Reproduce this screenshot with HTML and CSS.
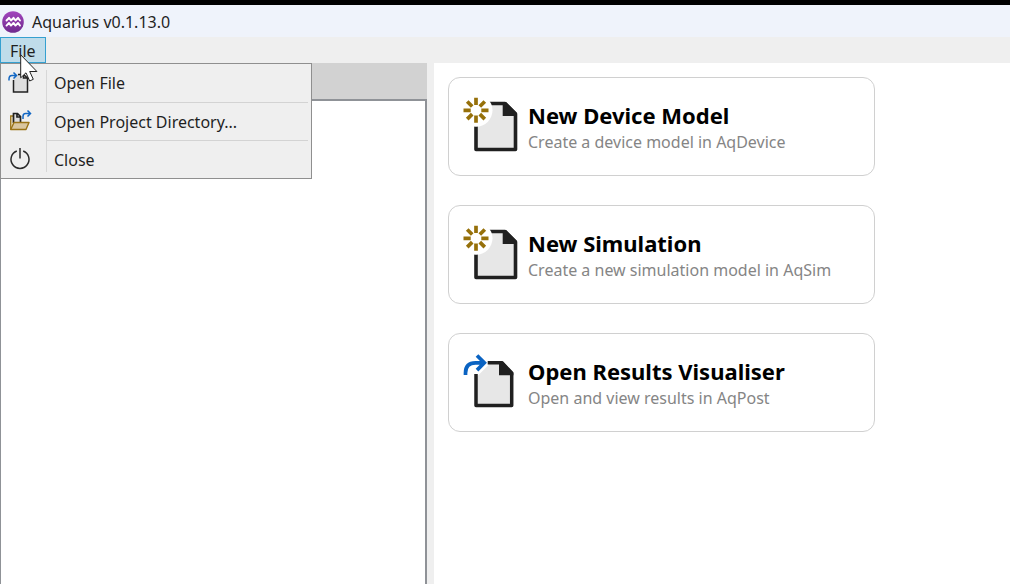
FILE: index.html
```html
<!DOCTYPE html>
<html lang="en">
<head>
<meta charset="utf-8">
<title>Aquarius v0.1.13.0</title>
<link rel="stylesheet" href="styles.css">
</head>
<body>
<div class="app">
  <header class="titlebar">
    <svg class="logo" viewBox="0 0 22 22" aria-hidden="true">
      <defs><linearGradient id="purple" x1="0" y1="0" x2="0" y2="1"><stop offset="0" stop-color="#a245bd"/><stop offset="1" stop-color="#702b8e"/></linearGradient></defs>
      <circle cx="11" cy="11" r="10.8" fill="url(#purple)"/>
      <path d="M4.500 9.500 7 6.800l2 2.700 2.500-2.700 2 2.700L16 6.800l2 2.700M4.500 14.600l2.500-2.700 2 2.700 2.500-2.700 2 2.700 2.500-2.700 2 2.700" fill="none" stroke="#fff" stroke-width="1.900" stroke-linecap="round" stroke-linejoin="round"/>
    </svg>
    <span>Aquarius v0.1.13.0</span>
  </header>
  <nav class="menubar">
    <button class="menu-button" type="button" aria-haspopup="true" aria-expanded="true">File</button>
    <div class="menu" role="menu">
      <button class="menu-item" type="button" role="menuitem">
        <svg class="menu-icon" viewBox="0 0 24 24" aria-hidden="true">
          <path d="M5 9v12h14V6h-4V3H9z" fill="#dedede"/>
          <path d="M5.500 9v12h14V6.500M10 3.500h5.500l4 3.500h-4V3.500" fill="none" stroke="#222" stroke-width="1.500"/>
          <path d="M1 9.500V8q0-3.500 3-3.500h4M5.500 1.500l3 3-3 3" fill="none" stroke="#1267c4" stroke-width="1.500"/>
        </svg>
        <span class="menu-label">Open File</span>
      </button>
      <button class="menu-item" type="button" role="menuitem">
        <svg class="menu-icon" viewBox="0 0 24 24" aria-hidden="true">
          <path d="M2.700 20.500V7h3v7h13v3" fill="#eee2c6" stroke="#9a7417" stroke-width="1.300"/>
          <path d="M5.500 14V4.500h4l3 3V14M9 4.500V8h3.500" fill="#ddd" stroke="#222" stroke-width="1.700"/>
          <path d="M2.700 20.500 6 13.500h15l-3 7z" fill="#dac79f" stroke="#9a7417" stroke-width="1.400" stroke-linejoin="round"/>
          <path d="M15 10V7.500q0-3 2.500-3H22M19.500 1.500l3 3-3 3" fill="none" stroke="#1267c4" stroke-width="1.500"/>
        </svg>
        <span class="menu-label">Open Project Directory...</span>
      </button>
      <button class="menu-item" type="button" role="menuitem">
        <svg class="menu-icon" viewBox="0 0 24 24" aria-hidden="true">
          <path d="M8.800 4A9 9 0 1 0 15.200 4M12 1v10.500" fill="none" stroke="#2b2b2b" stroke-width="1.500"/>
        </svg>
        <span class="menu-label">Close</span>
      </button>
    </div>
    <svg class="pointer" viewBox="0 0 18 28" aria-hidden="true">
      <path d="M.7.800v23l5.300-5 3.700 8.200 3.600-1.700-3.600-7.800h7.200z" fill="#fff" stroke="#222" stroke-width="1"/>
    </svg>
  </nav>
  <div class="workspace">
    <aside class="project">
      <div class="project-head"></div>
      <div class="project-body"></div>
    </aside>
    <main class="start">
      <button class="card" type="button">
        <svg class="card-icon" viewBox="0 0 56 60" aria-hidden="true">
          <g id="new-document">
            <path d="M13 6.500h29l10.500 10.500v35.500H13z" fill="#e7e7e7" stroke="#202020" stroke-width="3.600" stroke-linejoin="round"/>
            <path d="M39.700 5h3.300l11 11v3H39.700z" fill="#202020"/>
            <circle cx="13" cy="13.300" r="16.500" fill="#fff"/>
            <path d="M13 .8v7.200M13 18.600v7.200M.5 13.300h7.200M18.300 13.300h7.200M4.200 4.500l5 5M16.800 17.100l5 5M4.200 22.100l5-5M16.800 9.500l5-5" fill="none" stroke="#96700a" stroke-width="3.700"/>
          </g>
        </svg>
        <span class="card-text">
          <span class="card-title">New Device Model</span>
          <span class="card-note">Create a device model in AqDevice</span>
        </span>
      </button>
      <button class="card" type="button">
        <svg class="card-icon" viewBox="0 0 56 60" aria-hidden="true"><use href="#new-document"/></svg>
        <span class="card-text">
          <span class="card-title">New Simulation</span>
          <span class="card-note">Create a new simulation model in AqSim</span>
        </span>
      </button>
      <button class="card" type="button">
        <svg class="card-icon" viewBox="0 0 56 60" aria-hidden="true">
          <path d="M13 24.500 26 11.500V9h12l11 11v32.500H13z" fill="#e7e7e7"/>
          <path d="M24.700 9.700H39L48.700 20v32.500H13V21" fill="none" stroke="#202020" stroke-width="3.500" stroke-linejoin="round"/>
          <path d="M36 8h3l11.400 11.700v2.600H36z" fill="#202020"/>
          <path d="M2.500 22v-2q0-10.200 10-10.200h8M14 2.500l7.300 7.300-7.300 7.300" fill="none" stroke="#0a63c2" stroke-width="3.700"/>
        </svg>
        <span class="card-text">
          <span class="card-title">Open Results Visualiser</span>
          <span class="card-note">Open and view results in AqPost</span>
        </span>
      </button>
    </main>
  </div>
</div>
</body>
</html>
```
FILE: styles.css
```css
* { box-sizing: border-box; }

body {
  margin: 0;
  font-family: "Noto Sans", "Open Sans", sans-serif;
  font-size: 16px;
  color: #1f1f1f;
}

button {
  font: inherit;
  color: inherit;
  text-align: left;
}

.app {
  display: flex;
  flex-direction: column;
  min-height: 100vh;
  border-top: 5px solid #000;
  background: #efefef;
}

.titlebar {
  display: flex;
  align-items: center;
  gap: 8px;
  height: 32px;
  padding: 1px 2px 0;
  background: #eff3fb;
}

.logo { width: 22px; height: 22px; }

.menubar {
  position: relative;
  display: flex;
  height: 26px;
}

.menu-button {
  padding: 2px 9px 0;
  border: 1px solid #35a0d0;
  background: #bfdcea;
  line-height: 22px;
}

.menu {
  position: absolute;
  top: 26px;
  left: 0;
  z-index: 1;
  width: 312px;
  border: 1px solid #8f8f8f;
  background: #efefef;
}

.menu::before {
  content: "";
  position: absolute;
  top: 6px;
  bottom: 6px;
  left: 45px;
  width: 1px;
  background: #d7d7d7;
}

.menu-item {
  display: flex;
  align-items: center;
  gap: 14px;
  width: 100%;
  height: 38px;
  padding: 0 3px 0 7px;
  border: 0;
  background: none;
}

.menu-icon { flex: none; width: 24px; height: 24px; }

.menu-label {
  flex: 1;
  padding: 0 8px;
  line-height: 38px;
}

.menu-item + .menu-item .menu-label { border-top: 1px solid #d3d3d3; }

.pointer {
  position: absolute;
  top: 17px;
  left: 20px;
  z-index: 2;
  width: 18px;
  height: 28px;
}

.workspace {
  flex: 1;
  display: grid;
  grid-template-columns: 427px 1fr;
  gap: 7px;
}

.project { display: flex; flex-direction: column; }

.project-head { height: 36px; background: #d2d2d2; }

.project-body {
  flex: 1;
  border: solid #8f9297;
  border-width: 2px 2px 0 1px;
  background: #fff;
}

.start {
  display: flex;
  flex-direction: column;
  gap: 29px;
  padding: 14px;
  background: #fff;
}

.card {
  display: flex;
  align-items: center;
  gap: 9px;
  width: 100%;
  max-width: 427px;
  height: 99px;
  padding: 0 14px;
  border: 1px solid #d0d0d0;
  border-radius: 12px;
  background: #fff;
}

.card-icon { flex: none; width: 56px; height: 60px; }

.card-text { display: flex; flex-direction: column; }

.card-title {
  font-size: 22px;
  font-weight: 700;
  line-height: 30px;
  color: #000;
}

.card-note { line-height: 24px; color: #858585; }
```
